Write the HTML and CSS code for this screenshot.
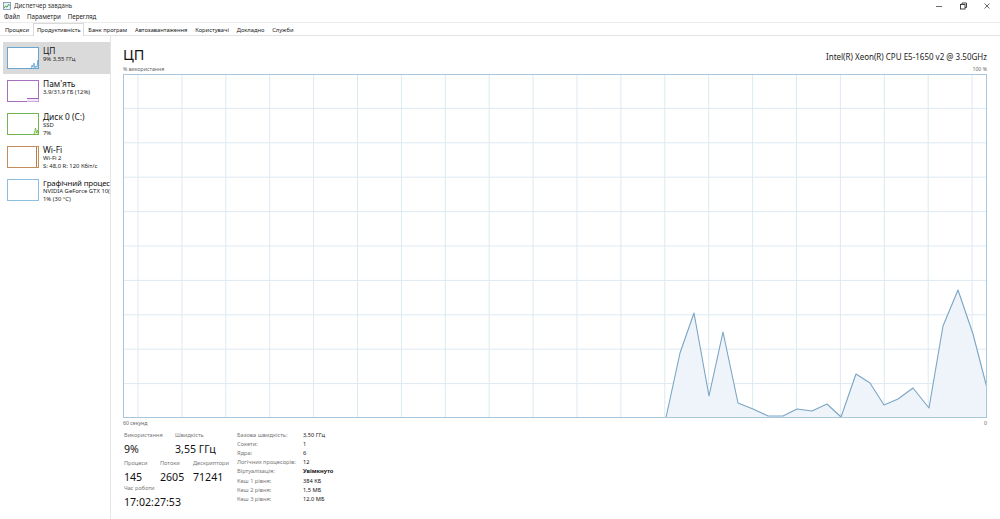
FILE: index.html
```html
<!DOCTYPE html>
<html lang="uk">
<head>
<meta charset="utf-8">
<title>Диспетчер завдань</title>
<link rel="stylesheet" href="styles.css">
</head>
<body>
<div class="window">
  <div class="titlebar">
    <svg class="app-icon" viewBox="0 0 8 8" width="8" height="8">
      <rect x="0.5" y="0.5" width="7" height="7" fill="#e8f1f8" stroke="#6f8fa8" stroke-width="0.8"/>
      <polyline points="1,6 2.5,4 4,5.2 5.5,2.5 7,3.5" fill="none" stroke="#3a9a3a" stroke-width="0.9"/>
    </svg>
    <span class="title">Диспетчер завдань</span>
    <div class="controls">
      <svg viewBox="0 0 24 12" width="24" height="12"><line x1="9" y1="6.5" x2="15" y2="6.5" stroke="#444" stroke-width="0.8"/></svg>
      <svg viewBox="0 0 24 12" width="24" height="12"><rect x="9.5" y="4.5" width="4.5" height="4.5" fill="none" stroke="#333" stroke-width="0.9"/><polyline points="11,4.5 11,3 15.5,3 15.5,7.5 14,7.5" fill="none" stroke="#333" stroke-width="0.9"/></svg>
      <svg viewBox="0 0 24 12" width="24" height="12"><path d="M9.5 3.5 L14.5 8.5 M14.5 3.5 L9.5 8.5" stroke="#444" stroke-width="0.8"/></svg>
    </div>
  </div>

  <nav class="menubar">
    <span>Файл</span><span>Параметри</span><span>Перегляд</span>
  </nav>

  <div class="tabs">
    <span class="tab">Процеси</span>
    <span class="tab active">Продуктивність</span>
    <span class="tab">Банк програм</span>
    <span class="tab">Автозавантаження</span>
    <span class="tab">Користувачі</span>
    <span class="tab">Докладно</span>
    <span class="tab">Служби</span>
  </div>

  <div class="main">
    <aside class="sidebar">
      <div class="item selected">
        <svg class="thumb" viewBox="0 0 32 22">
          <rect x="0.5" y="0.5" width="31" height="21" fill="#fff" stroke="#6aa6d0"/>
          <polygon points="24,21.5 25,18 26,20 27,16 28,21 29,19 30,20 31,13 31.5,21.5" fill="#d6e7f3" stroke="#3d8fc6" stroke-width="0.6"/>
        </svg>
        <div class="item-text">
          <div class="item-name">ЦП</div>
          <div class="item-sub">9% 3,55 ГГц</div>
        </div>
      </div>
      <div class="item">
        <svg class="thumb" viewBox="0 0 32 22">
          <rect x="0.5" y="0.5" width="31" height="21" fill="#fff" stroke="#a670bf"/>
          <rect x="20" y="18.5" width="11.5" height="3" fill="#f3e8f7"/>
          <line x1="20" y1="18.5" x2="31.5" y2="18.5" stroke="#8b3aa8" stroke-width="0.8"/>
        </svg>
        <div class="item-text">
          <div class="item-name">Пам'ять</div>
          <div class="item-sub">3,9/31,9 ГБ (12%)</div>
        </div>
      </div>
      <div class="item">
        <svg class="thumb" viewBox="0 0 32 22">
          <rect x="0.5" y="0.5" width="31" height="21" fill="#fff" stroke="#72b654"/>
          <polygon points="27,21.5 28.5,15 29.5,20 30.5,17 31.5,21.5" fill="#e2f1da" stroke="#4da60c" stroke-width="0.6"/>
        </svg>
        <div class="item-text">
          <div class="item-name">Диск 0 (C:)</div>
          <div class="item-sub">SSD</div>
          <div class="item-sub">7%</div>
        </div>
      </div>
      <div class="item">
        <svg class="thumb" viewBox="0 0 32 22">
          <rect x="0.5" y="0.5" width="31" height="21" fill="#fff" stroke="#c58c5c"/>
          <line x1="29.5" y1="1" x2="29.5" y2="21" stroke="#a7581a" stroke-width="0.8"/>
        </svg>
        <div class="item-text">
          <div class="item-name">Wi-Fi</div>
          <div class="item-sub">Wi-Fi 2</div>
          <div class="item-sub">S: 48,0 R: 120 Кбіт/с</div>
        </div>
      </div>
      <div class="item">
        <svg class="thumb" viewBox="0 0 32 22">
          <rect x="0.5" y="0.5" width="31" height="21" fill="#fff" stroke="#8fbfe0"/>
        </svg>
        <div class="item-text">
          <div class="item-name narrow">Графічний процес</div>
          <div class="item-sub">NVIDIA GeForce GTX 10(</div>
          <div class="item-sub">1% (30 °C)</div>
        </div>
      </div>
    </aside>

    <section class="perf">
      <header class="perf-head">
        <h1>ЦП</h1>
        <div class="cpu-name">Intel(R) Xeon(R) CPU E5-1650 v2 @ 3.50GHz</div>
      </header>
      <div class="axis">
        <span>% використання</span><span>100 %</span>
      </div>

      <svg class="chart" viewBox="0 0 864 344" width="864" height="344">
        <g stroke="#dde9f2" stroke-width="1">
          <line x1="15" y1="0" x2="15" y2="344"/>
          <line x1="58.9" y1="0" x2="58.9" y2="344"/>
          <line x1="102.8" y1="0" x2="102.8" y2="344"/>
          <line x1="146.7" y1="0" x2="146.7" y2="344"/>
          <line x1="190.6" y1="0" x2="190.6" y2="344"/>
          <line x1="234.5" y1="0" x2="234.5" y2="344"/>
          <line x1="278.4" y1="0" x2="278.4" y2="344"/>
          <line x1="322.3" y1="0" x2="322.3" y2="344"/>
          <line x1="366.2" y1="0" x2="366.2" y2="344"/>
          <line x1="410.1" y1="0" x2="410.1" y2="344"/>
          <line x1="454" y1="0" x2="454" y2="344"/>
          <line x1="497.9" y1="0" x2="497.9" y2="344"/>
          <line x1="541.8" y1="0" x2="541.8" y2="344"/>
          <line x1="585.7" y1="0" x2="585.7" y2="344"/>
          <line x1="629.6" y1="0" x2="629.6" y2="344"/>
          <line x1="673.5" y1="0" x2="673.5" y2="344"/>
          <line x1="717.4" y1="0" x2="717.4" y2="344"/>
          <line x1="761.3" y1="0" x2="761.3" y2="344"/>
          <line x1="805.2" y1="0" x2="805.2" y2="344"/>
          <line x1="849.1" y1="0" x2="849.1" y2="344"/>
          <line x1="0" y1="34.4" x2="864" y2="34.4"/>
          <line x1="0" y1="68.8" x2="864" y2="68.8"/>
          <line x1="0" y1="103.2" x2="864" y2="103.2"/>
          <line x1="0" y1="137.6" x2="864" y2="137.6"/>
          <line x1="0" y1="172" x2="864" y2="172"/>
          <line x1="0" y1="206.4" x2="864" y2="206.4"/>
          <line x1="0" y1="240.8" x2="864" y2="240.8"/>
          <line x1="0" y1="275.2" x2="864" y2="275.2"/>
          <line x1="0" y1="309.6" x2="864" y2="309.6"/>
        </g>
        <polygon fill="#eef4fa" points="543,344 557,279 571,239 586,322 600,258 615,329 630,335 645,342 660,342 674,335 689,337 704,330 718,343 733,300 747,309 761,331 775,325 790,314 806,334 820,252 835,216 850,260 864,314 864,344"/>
        <polyline fill="none" stroke="#7aa5c4" stroke-width="1.1" stroke-linejoin="round" points="0,343.5 543,343.5 557,279 571,239 586,322 600,258 615,329 630,335 645,342 660,342 674,335 689,337 704,330 718,343 733,300 747,309 761,331 775,325 790,314 806,334 820,252 835,216 850,260 864,314"/>
        <rect x="0.5" y="0.5" width="863" height="343" fill="none" stroke="#a9c7dc" stroke-width="1"/>
      </svg>

      <div class="axis">
        <span>60 секунд</span><span>0</span>
      </div>

      <div class="stats">
        <div class="stats-left">
          <div class="stat-row">
            <div class="stat w51"><div class="label">Використання</div><div class="value">9%</div></div>
            <div class="stat"><div class="label">Швидкість</div><div class="value">3,55 ГГц</div></div>
          </div>
          <div class="stat-row">
            <div class="stat w36"><div class="label">Процеси</div><div class="value">145</div></div>
            <div class="stat w33"><div class="label">Потоки</div><div class="value">2605</div></div>
            <div class="stat"><div class="label">Дескриптори</div><div class="value">71241</div></div>
          </div>
          <div class="stat-row">
            <div class="stat"><div class="label">Час роботи</div><div class="value">17:02:27:53</div></div>
          </div>
        </div>
        <dl class="stats-right">
          <dt>Базова швидкість:</dt><dd>3,50 ГГц</dd>
          <dt>Сокети:</dt><dd>1</dd>
          <dt>Ядра:</dt><dd>6</dd>
          <dt>Логічних процесорів:</dt><dd>12</dd>
          <dt>Віртуалізація:</dt><dd class="strong">Увімкнуто</dd>
          <dt>Кеш 1 рівня:</dt><dd>384 КБ</dd>
          <dt>Кеш 2 рівня:</dt><dd>1,5 МБ</dd>
          <dt>Кеш 3 рівня:</dt><dd>12,0 МБ</dd>
        </dl>
      </div>
    </section>
  </div>
</div>
</body>
</html>
```

FILE: styles.css
```css
* {
  box-sizing: border-box;
}

html, body {
  margin: 0;
  padding: 0;
  background: #fff;
}

body {
  font-family: "Noto Sans", "Open Sans", sans-serif;
  color: #1a1a1a;
  width: 1000px;
  height: 519px;
  overflow: hidden;
}

.window {
  width: 1000px;
  height: 519px;
  display: flex;
  flex-direction: column;
}

/* title bar */
.titlebar {
  height: 12px;
  display: flex;
  align-items: center;
  padding-left: 3px;
}

.app-icon {
  display: block;
  margin-right: 3px;
}

.title {
  font-size: 6.2px;
  color: #333;
  line-height: 12px;
}

.controls {
  margin-left: auto;
  display: flex;
  margin-right: 1px;
}

.controls svg {
  display: block;
}

/* menu */
.menubar {
  height: 10px;
  display: flex;
  gap: 7px;
  padding-left: 4px;
  font-size: 6.2px;
  line-height: 10px;
  color: #222;
}

/* tabs */
.tabs {
  height: 14px;
  display: flex;
  align-items: stretch;
  border-top: 1px solid #ececec;
  border-bottom: 1px solid #e3e3e3;
  padding-left: 1px;
  font-size: 5.75px;
  line-height: 12px;
  color: #222;
}

.tab {
  padding: 0 2.9px;
  border: 1px solid transparent;
  border-bottom: none;
}

.tab.active {
  background: #fff;
  border-color: #d9d9d9;
  margin-bottom: -1px;
}

/* main area */
.main {
  flex: 1;
  display: flex;
  min-height: 0;
}

.sidebar {
  width: 111px;
  flex: none;
  border-right: 1px solid #e6e6e6;
  padding: 6px 0 0 3px;
}

.item {
  height: 33px;
  display: flex;
  align-items: flex-start;
  padding: 5px 0 0 4px;
  overflow: hidden;
}

.item.selected {
  background: #dadada;
  height: 32px;
  margin-bottom: 1px;
}

.thumb {
  width: 32px;
  height: 22px;
  flex: none;
  display: block;
}

.item-text {
  margin-left: 4px;
  margin-top: -1px;
  white-space: nowrap;
  min-width: 0;
}

.item-name {
  font-size: 8.4px;
  line-height: 10px;
  color: #111;
}

/* long adapter name squeezed to the pane width */
.item-name.narrow {
  font-size: 7.9px;
  letter-spacing: -0.15px;
}

.item-sub {
  font-size: 5.9px;
  line-height: 7.6px;
  color: #222;
}

/* performance pane */
.perf {
  flex: 1;
  padding: 8px 13px 0 12px;
  display: flex;
  flex-direction: column;
}

.perf-head {
  height: 20px;
  display: flex;
  align-items: center;
  justify-content: space-between;
}

.perf-head h1 {
  margin: 0;
  font-size: 14.5px;
  font-weight: 400;
  line-height: 18px;
  color: #111;
}

.cpu-name {
  font-size: 8px;
  color: #222;
  margin-top: 4px;
}

.axis {
  height: 10px;
  display: flex;
  justify-content: space-between;
  align-items: center;
  font-size: 5.2px;
  color: #666;
}

.chart {
  display: block;
  width: 864px;
  height: 344px;
  flex: none;
}

/* statistics */
.stats {
  display: flex;
  padding-top: 3px;
}

.stats-left {
  width: 114px;
  padding-left: 1px;
}

.stat-row {
  display: flex;
}

.stat-row + .stat-row {
  margin-top: 3px;
}

.stat-row:last-child {
  margin-top: 0;
}

.w51 { width: 51px; }
.w36 { width: 36px; }
.w33 { width: 33px; }

.label {
  font-size: 5.6px;
  line-height: 8px;
  color: #777;
  white-space: nowrap;
}

.value {
  margin-top: 3px;
  font-size: 10.6px;
  line-height: 14px;
  color: #111;
  white-space: nowrap;
}

.stats-right {
  margin: 0;
  display: grid;
  grid-template-columns: 66px auto;
  grid-auto-rows: 9.1px;
  align-items: center;
  font-size: 5.7px;
  line-height: 9px;
}

.stats-right dt {
  color: #777;
  white-space: nowrap;
}

.stats-right dd {
  margin: 0;
  color: #111;
}

.stats-right dd.strong {
  font-weight: 700;
}
```
